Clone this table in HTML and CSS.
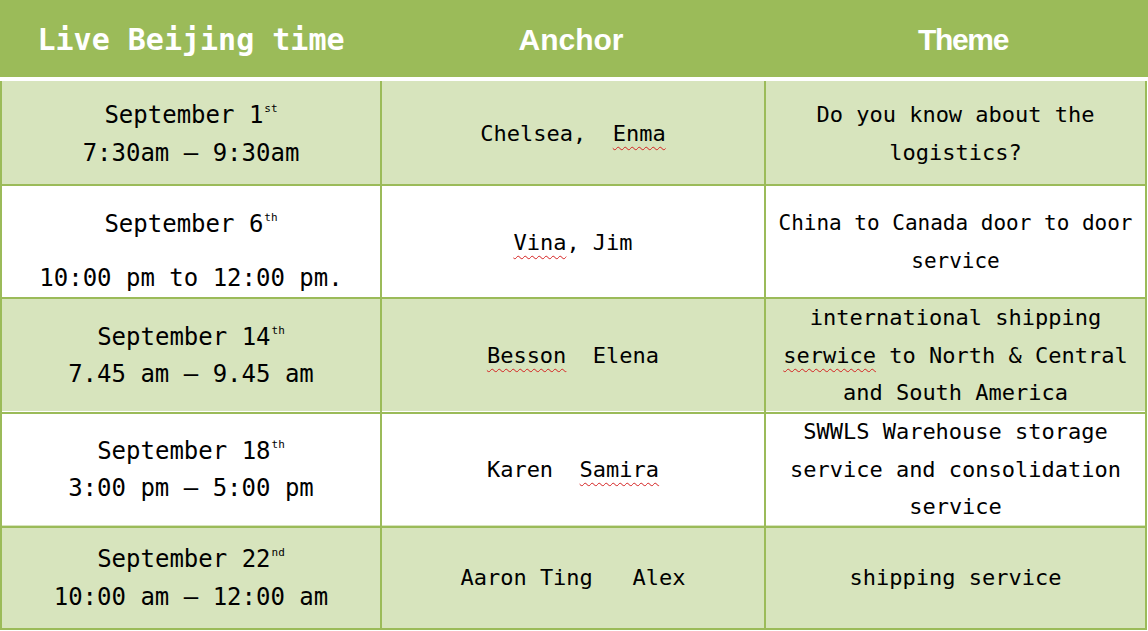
FILE: index.html
```html
<!DOCTYPE html>
<html>
<head>
<meta charset="utf-8">
<link rel="stylesheet" href="styles.css">
</head>
<body>
<div class="sheet">
  <div class="head">
    <div class="hcell hmono">Live Beijing time</div>
    <div class="hcell hsans anchor">Anchor</div>
    <div class="hcell hsans theme">Theme</div>
  </div>
  <div class="body">
    <div class="row alt r1">
      <div class="cell when"><div>September 1<sup class="ord">st</sup></div><div>7:30am – 9:30am</div></div>
      <div class="cell"><div>Chelsea,&nbsp; <span class="spell">Enma</span></div></div>
      <div class="cell"><div>Do you know about the</div><div>logistics?</div></div>
    </div>
    <div class="row r2">
      <div class="cell when shifted"><div>September 6<sup class="ord">th</sup></div><div class="gap">10:00 pm to 12:00 pm.</div></div>
      <div class="cell"><div><span class="spell">Vina</span>, Jim</div></div>
      <div class="cell narrow"><div>China to Canada door to door</div><div>service</div></div>
    </div>
    <div class="row alt r3">
      <div class="cell when"><div>September 14<sup class="ord">th</sup></div><div>7.45 am – 9.45 am</div></div>
      <div class="cell"><div><span class="spell">Besson</span>&nbsp; Elena</div></div>
      <div class="cell"><div>international shipping</div><div><span class="spell">serwice</span> to North &amp; Central</div><div>and South America</div></div>
    </div>
    <div class="row r4">
      <div class="cell when"><div>September 18<sup class="ord">th</sup></div><div>3:00 pm – 5:00 pm</div></div>
      <div class="cell"><div>Karen&nbsp; <span class="spell">Samira</span></div></div>
      <div class="cell"><div>SWWLS Warehouse storage</div><div>service and consolidation</div><div>service</div></div>
    </div>
    <div class="row alt r5">
      <div class="cell when"><div>September 22<sup class="ord">nd</sup></div><div>10:00 am – 12:00 am</div></div>
      <div class="cell"><div>Aaron Ting&nbsp;&nbsp; Alex</div></div>
      <div class="cell"><div>shipping service</div></div>
    </div>
  </div>
</div>
</body>
</html>
```

FILE: styles.css
```css
html, body {
  margin: 0;
  padding: 0;
  background: #ffffff;
}

.sheet {
  width: 1148px;
  height: 631px;
  overflow: hidden;
  background: #ffffff;
}

.head {
  display: grid;
  grid-template-columns: 382px 384px 382px;
  height: 77px;
  background: #9bbb59;
  color: #ffffff;
  margin-bottom: 4px;
}

.hcell {
  display: flex;
  align-items: center;
  justify-content: center;
  padding-top: 2px;
}

.hmono {
  font-family: "DejaVu Sans Mono", monospace;
  font-weight: bold;
  font-size: 30px;
}

.hsans {
  font-family: "Liberation Sans", Arial, sans-serif;
  font-weight: bold;
  font-size: 30px;
}

.anchor {
  padding-right: 6px;
}

.theme {
  padding-left: 12px;
  letter-spacing: -1.3px;
}

.body {
  width: 1145px;
  border-left: 2px solid #9bbb59;
}

.row {
  display: grid;
  grid-template-columns: 380px 384px 381px;
  background: #ffffff;
}

.row.alt {
  background: #d7e4bd;
}

.r1 { height: 105px; }
.r2 { height: 111px; }
.r3 { height: 114px; }
.r4 { height: 114px; }
.r5 { height: 105px; }

.cell {
  box-sizing: border-box;
  border-right: 2px solid #9bbb59;
  border-bottom: 2px solid #9bbb59;
  padding-top: 2px;
  display: flex;
  flex-direction: column;
  align-items: center;
  justify-content: center;
  text-align: center;
  font-family: "DejaVu Sans Mono", monospace;
  font-size: 22px;
  line-height: 37.5px;
  color: #000000;
  white-space: nowrap;
}

.cell.when {
  font-size: 24px;
  padding-top: 4px;
}

.cell.narrow {
  font-size: 21px;
}

.cell.when.shifted {
  padding-top: 20px;
}

.gap {
  margin-top: 16px;
}

.ord {
  font-size: 11px;
  line-height: 0;
  vertical-align: 11px;
  margin-left: 1px;
}

.spell {
  text-decoration: underline wavy #d42020;
  text-decoration-thickness: 1px;
  text-underline-offset: 5px;
}
```
